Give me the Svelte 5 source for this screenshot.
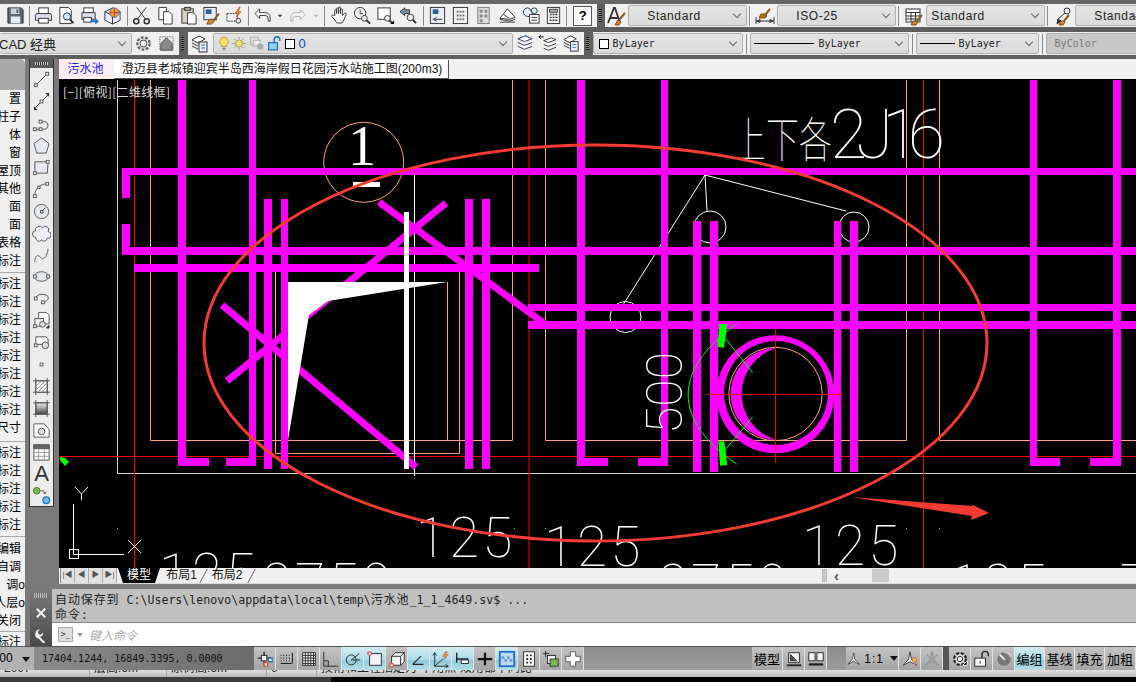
<script>
  // 20x20 icons, kept as svg fragments
  const I = {
    save: '<path d="M2 2h14l2 2v14H2z" fill="#566674" stroke="#333"/><rect x="5" y="2.5" width="9" height="6" fill="#c9d0d6" stroke="none"/><rect x="5" y="11" width="10" height="7" fill="#e8ebee" stroke="none"/><rect x="11" y="3.5" width="2" height="4" fill="#566674" stroke="none"/>',
    print: '<rect x="5" y="2" width="10" height="6" fill="#fff"/><path d="M3 8h14a2 2 0 0 1 1.500 2v5H1.500v-5A2 2 0 0 1 3 8z" fill="#dde"/><rect x="5" y="13" width="10" height="5" fill="#fff"/>',
    preview: '<path d="M3 1.500h9l3 3v14H3z" fill="#fff"/><circle cx="10.500" cy="11" r="3.800" fill="#cfe6f5"/><path d="M13.500 14l4 4" stroke-width="2"/>',
    publish: '<rect x="4" y="2" width="10" height="5" fill="#fff"/><path d="M2 7h14v7H2z" fill="#dde"/><rect x="4" y="12" width="8" height="5" fill="#fff"/><path d="M11 15h5v-2.500l4 3.500-4 3.500V17h-5z" fill="#1b6fc0" stroke="none"/>',
    plot3d: '<path d="M2 6l8-4 8 4v9l-8 4-8-4z" fill="#eef"/><path d="M2 6l8 4 8-4M10 10v9"/><circle cx="12" cy="7" r="5" fill="#e8a13a" stroke="#2b7ccc"/><path d="M12 2v10M7 7h10" stroke="#d33"/>',
    cut: '<path d="M5 1.500l9 12M15 1.500l-9 12"/><circle cx="4.500" cy="16" r="2.700" stroke-width="1.600"/><circle cx="15.500" cy="16" r="2.700" stroke-width="1.600"/>',
    copy: '<path d="M3 1.500h8v13H3z" fill="#fff"/><path d="M8 6h6l3 3v10H8z" fill="#fff"/>',
    paste: '<rect x="3" y="3" width="12" height="15" fill="#d6d0c0"/><rect x="6" y="1.500" width="6" height="3" fill="#aaa"/><path d="M9 7h6l3 3v9H9z" fill="#fff"/>',
    match: '<rect x="2" y="1.500" width="13" height="13" fill="#e8eef5"/><rect x="4" y="3.500" width="6" height="5" fill="#2a5f9e" stroke="none"/><path d="M18 8l-6 7" stroke="#8a5a20" stroke-width="2"/><path d="M8 14l4 0 1 2-3 3-5 0z" fill="#d88a2a" stroke="#7a4a10"/>',
    block: '<rect x="2" y="8" width="11" height="8" stroke-dasharray="2 1"/><circle cx="14" cy="15.500" r="2.500" fill="#eee"/><path d="M15 1l-4 6h3l-2 5 5-6h-3l2-5z" fill="#f0a020" stroke="#b33" stroke-width=".6"/>',
    undo: '<path d="M7 3L2 8l5 5v-3h6a3 3 0 0 1 3 3v3h2v-4a5 5 0 0 0-5-5H7z" fill="#fff"/>',
    redo: '<path d="M13 4l5 5-5 5v-3H8a3 3 0 0 0-3 3v2H3v-4a5 5 0 0 1 5-5h5z" fill="#f4f4f4" stroke="#aaa"/>',
    down: '<path d="M6 8h8l-4 4z" fill="#333" stroke="none"/>',
    downg: '<path d="M6 8h8l-4 4z" fill="#aaa" stroke="none"/>',
    hand: '<path d="M5 10V5a1 1 0 0 1 2 0v3-5a1 1 0 0 1 2 0v5-6a1 1 0 0 1 2 0v6-4a1 1 0 0 1 2 0v6l2-2a1 1 0 0 1 2 1l-3 7a3 3 0 0 1-3 2H9a3 3 0 0 1-3-2l-4-5a1 1 0 0 1 2-1z" fill="#fff"/>',
    zoomrt: '<circle cx="7.500" cy="7.500" r="6" fill="#eee"/><path d="M7.500 4v4h3"/><circle cx="12" cy="13" r="3" fill="#fff"/><path d="M14 15l4 3.500" stroke-width="2"/>',
    zoomwin: '<rect x="2" y="2" width="13" height="12" fill="#fff"/><circle cx="12" cy="13" r="3" fill="#eee"/><path d="M14 15l3 3" stroke-width="2"/><path d="M15 19l4-4v4z" fill="#000" stroke="none"/>',
    zoomprev: '<path d="M1 6l5-4v2h5v4H6v2z" fill="#7790a8"/><circle cx="12" cy="12" r="3.500" fill="#eee"/><path d="M14.500 14.500l3.500 3.500" stroke-width="2"/>',
    prop: '<rect x="2.500" y="1.500" width="15" height="17" fill="#e8eef5"/><rect x="5" y="3.500" width="6" height="5" fill="#2a5f9e" stroke="none"/><path d="M5 14h10M9 12l-3 2 3 2"/>',
    design: '<rect x="2.500" y="1.500" width="15" height="17" fill="#f2f2f2"/><path d="M6 5h2v2H6zM9 5h2v2H9zM12 5h2v2h-2zM6 9h2v2H6zM9 9h2v2H9zM12 9h2v2h-2zM6 13h2v2H6zM9 13h2v2H9zM12 13h2v2h-2z" fill="#777" stroke="none"/>',
    palette: '<rect x="4" y="1.500" width="12" height="17" fill="#ddd" stroke="#777"/><path d="M6 4h3v3H6zM11 4h3v3h-3zM6 9h3v3H6zM11 9h3v3h-3zM6 14h3v3H6z" fill="#888" stroke="none"/>',
    sheet: '<path d="M2 13l8-10 8 9-6 2z" fill="#fff"/><path d="M2 14l10 2 6-2M2 17h16"/><path d="M6 9l6 4"/>',
    markup: '<path d="M7 2a3 3 0 0 1 3 3 3 3 0 0 1-3 6 3 3 0 0 1 0-9z" fill="#e8f2f8"/><rect x="9" y="9" width="10" height="9" fill="#fff"/><path d="M11 12h6M11 15h6"/><circle cx="14" cy="5" r="3" fill="#dff"/>',
    calc: '<rect x="3.500" y="1.500" width="13" height="17" fill="#f4f4f4"/><rect x="6" y="3.500" width="8" height="3" fill="#bbb"/><path d="M6 9h2M9 9h2M12 9h2M6 12h2M9 12h2M12 12h2M6 15h2M9 15h2M12 15h2" stroke-width="1.500"/>',
    astyle: '<path d="M1 17L7 2h1l5 15M3.500 12h7" stroke-width="1.800"/><path d="M18 7l-6 7" stroke="#8a5a20" stroke-width="2"/><path d="M11 14l3 2-2 3-4 0z" fill="#d88a2a" stroke="#7a4a10"/>',
    dstyle: '<path d="M1 11v7M19 11v7M1 15h18M2 15l3-1.500v3zM18 15l-3-1.500v3z"/><path d="M15 3l-5 6" stroke="#8a5a20" stroke-width="2"/><path d="M6 8l4 0 2 2-2 2-6 0z" fill="#b86a20" stroke="#7a4a10"/>',
    tstyle: '<rect x="2" y="3" width="14" height="13" fill="#fff"/><path d="M2 6.500h14M2 10h14M2 13h14M7 6.500V16M11.500 6.500V16"/><path d="M18 9l-5 6" stroke="#8a5a20" stroke-width="2"/><path d="M9 15l4 0 1 1-2 3-5 0z" fill="#d88a2a" stroke="#7a4a10"/>',
    mstyle: '<circle cx="14" cy="5" r="3"/><path d="M12 7L5 13v4"/><path d="M4 18l1-5 3 2z" fill="#333"/><path d="M16 9l-5 6" stroke="#8a5a20" stroke-width="2"/><path d="M8 15l3 0 1 1-2 3-4 0z" fill="#d88a2a" stroke="#7a4a10"/>',
    gear: '<circle cx="10" cy="10" r="6.500" stroke="#666" stroke-width="2.500" stroke-dasharray="3 1.500"/><circle cx="10" cy="10" r="3.500" stroke="#666" stroke-width="1.200"/>',
    house: '<rect x="3" y="3" width="14" height="14" stroke="#666" stroke-dasharray="1.500 1"/><path d="M4 10l6-6 6 6v7H4z" fill="#888" stroke="#555"/>',
    laymgr: '<path d="M2 6l7-4 6 3-7 4zM2 9l6 3M2 12l6 3" fill="#fff"/><rect x="9" y="8" width="8" height="10" fill="#eef"/><path d="M11 11h4M11 14h4" stroke="#27a"/>',
    bulb: '<path d="M10 2a5.500 5.500 0 0 1 3 10v2H7v-2a5.500 5.500 0 0 1 3-10z" fill="#f8e36a" stroke="#a88a20"/><path d="M7.500 16h5M8.500 18h3" stroke="#888" stroke-width="1.500"/>',
    sun: '<circle cx="10" cy="10" r="4.500" fill="#f6e27a" stroke="#a88a20"/><path d="M10 1.500v3M10 15.500v3M1.500 10h3M15.500 10h3M4 4l2 2M14 14l2 2M4 16l2-2M14 6l2-2" stroke="#888"/>',
    vpfreeze: '<rect x="2" y="2" width="10" height="10" stroke="#aaa" fill="#ddd"/><rect x="6" y="6" width="8" height="7" stroke="#aaa" fill="#eee"/><circle cx="14" cy="14" r="4" fill="#aaa" stroke="#ccc" stroke-dasharray="2 1"/>',
    lockopen: '<rect x="2" y="9" width="11" height="9" fill="#9ad0ee" stroke="#1b6fc0" stroke-width="1.500"/><path d="M9 9V5a3.500 3.500 0 0 1 7 0v2" stroke="#1b6fc0" stroke-width="1.800"/>',
    layers: '<path d="M3 5l8-3 7 3-8 3zM3 9l7 3 8-3M3 13l7 3 8-3" fill="#fff" stroke="#335"/><path d="M11 2l3 1" stroke="#27a"/>',
    layprev: '<path d="M6 7l8-3 5 2-8 3zM6 11l5 2 8-3M6 15l5 2 8-3" fill="#fff"/><path d="M1 3h5M1 3l2-2M1 3l2 2" stroke="#000"/>',
    line: '<path d="M4 16L16 4" stroke="#444"/><rect x="2.500" y="14.500" width="3" height="3" fill="#fff"/><rect x="14.500" y="2.500" width="3" height="3" fill="#fff"/>',
    xline: '<path d="M3 17L17 3" stroke="#444"/><path d="M2 15v4h4zM18 5V1h-4z" fill="#333" stroke="none"/><rect x="8.500" y="8.500" width="3" height="3" fill="#fff"/>',
    pline: '<path d="M3 16h10c5 0 5-8 0-8H9"/><rect x="1.500" y="14.500" width="3" height="3" fill="#fff"/><rect x="7.500" y="14.500" width="3" height="3" fill="#fff"/><rect x="7.500" y="6.500" width="3" height="3" fill="#fff"/>',
    polygon: '<path d="M10 2l8 6-3 10H5L2 8z" fill="#e6e8f0" stroke="#555"/>',
    rect: '<path d="M3 4h14l-1 12H3z" fill="#e6e8f0" stroke="#555"/><rect x="1.500" y="14.500" width="3" height="3" fill="#fff"/><rect x="15" y="2.500" width="3" height="3" fill="#fff"/>',
    arc: '<path d="M3 16C3 9 9 4 16 4"/><rect x="1.500" y="15.500" width="3" height="3" fill="#fff"/><rect x="14.500" y="2.500" width="3" height="3" fill="#fff"/><rect x="6" y="6.500" width="2.500" height="2.500" fill="#fff"/>',
    circle: '<circle cx="10" cy="10" r="7.500" fill="#e6e8f0"/><path d="M10 10l4-4"/><rect x="9" y="9" width="2.500" height="2.500" fill="#fff"/>',
    cloud: '<path d="M6 3a3.500 3.500 0 0 1 5 1 3.500 3.500 0 0 1 6 4 3.500 3.500 0 0 1-1 7 3.500 3.500 0 0 1-6 2 3.500 3.500 0 0 1-6-3 3.500 3.500 0 0 1 0-7 3 3 0 0 1 2-4z" fill="#eef"/>',
    spline: '<path d="M3 17c0-8 4-8 6-5s6 2 8-9"/>',
    ellipse: '<ellipse cx="10" cy="10" rx="7.500" ry="5" fill="#e6e8f0"/><rect x="1.500" y="8.500" width="3" height="3" fill="#fff"/><rect x="15.500" y="8.500" width="3" height="3" fill="#fff"/>',
    earc: '<path d="M4 10a7 5 0 0 1 13-2 7 5 0 0 1-5 6"/><rect x="2.500" y="8.500" width="3" height="3" fill="#fff"/><rect x="10" y="12.500" width="3" height="3" fill="#fff"/>',
    insert: '<path d="M7 1.500h8l3 3v9H7z" fill="#fff"/><rect x="3" y="8" width="9" height="8" fill="#eef"/><circle cx="11" cy="14" r="3" fill="#ddd"/><path d="M15 18h3v-3z" fill="#000"/><rect x="1.500" y="14.500" width="3" height="3" fill="#fff"/>',
    mkblock: '<path d="M4 4h11l2 3v5H4z" fill="#f4f4f4"/><circle cx="14" cy="13" r="3.500" fill="#ddd"/><rect x="2.500" y="11.500" width="3" height="3" fill="#fff"/>',
    point: '<rect x="8.500" y="8.500" width="3" height="3" fill="#fff"/>',
    hatch: '<rect x="4" y="4" width="12" height="12" fill="#fff"/><path d="M1 4h18M1 16h18M4 1v18M16 1v18"/><path d="M5 9l4-4M5 13l8-8M7 15l8-8M11 15l4-4" stroke="#777"/>',
    gradient: '<defs><linearGradient id="g1" x1="0" y1="0" x2="0" y2="1"><stop offset="0" stop-color="#eee"/><stop offset="1" stop-color="#444"/></linearGradient></defs><rect x="4" y="4" width="12" height="12" fill="url(#g1)"/><path d="M1 4h18M1 16h18M4 1v18M16 1v18"/>',
    region: '<path d="M2 3h11l5 6v8H2z" fill="#fff"/><circle cx="10" cy="11" r="3.500" fill="#ddd"/>',
    table: '<rect x="2" y="2" width="16" height="16" fill="#fff"/><rect x="2" y="2" width="16" height="4" fill="#666"/><path d="M2 10h16M2 14h16M7 6v12M13 6v12" stroke="#999"/>',
    addsel: '<circle cx="5" cy="5" r="3.500" fill="#7ab648" stroke="#4a7a28"/><circle cx="15" cy="15" r="3.500" fill="#7ab8ee" stroke="#1b6fc0" stroke-width="1.300"/><path d="M9 5h3l2 3M14 8l-2-.5M14 8l1-2"/>',
    s_infer: '<path d="M9 2v15M2 9h15" stroke-width="1.500"/><rect x="6" y="6" width="6" height="6" fill="#fff"/><rect x="14" y="9" width="4" height="4" fill="#fff" stroke="#27a" stroke-width="1.500"/><rect x="9" y="14" width="4" height="4" fill="#fff" stroke="#d55" stroke-width="1.500"/>',
    s_snap: '<path d="M3 6h1M6 6h1M9 6h1M12 6h1M3 9h1M6 9h1M9 9h1M12 9h1M3 12h1M6 12h1M9 12h1M12 12h1M3 15h12M16 3v12" stroke-width="1.200"/>',
    s_grid: '<rect x="3" y="3" width="14" height="14" fill="#fff"/><path d="M6 3v14M9 3v14M12 3v14M15 3v14M3 6h14M3 9h14M3 12h14M3 15h14"/>',
    s_ortho: '<path d="M2 2v16h16M7 12v6M2 12h5"/>',
    s_polar: '<circle cx="8" cy="11" r="5.500"/><path d="M8 11l9-7M8 11h10"/>',
    s_osnap: '<rect x="4" y="4" width="13" height="13" fill="#f4f4f4"/><circle cx="4" cy="4" r="2" fill="#fff" stroke="#d55" stroke-width="1.500"/>',
    s_3d: '<path d="M4 7l4-4h10v10l-4 4H4z" fill="#f4f4f4"/><path d="M4 7h10v10M14 7l4-4"/><circle cx="4" cy="17" r="2" fill="#fff" stroke="#d55" stroke-width="1.500"/>',
    s_otrack: '<path d="M3 16h12M3 16l9-9" stroke-width="1.300"/>',
    s_ducs: '<path d="M3 3v15h15M3 3l-2 3M3 3l2 3M18 18l-3-2M18 18l-3 2M3 18l9-8"/><path d="M15 2l-3 5h3l-2 4 5-6h-3l2-3z" fill="#f0a020" stroke="#b33" stroke-width=".5"/>',
    s_dyn: '<path d="M3 3v11M3 10h13" stroke-width="1.500"/><rect x="8" y="11" width="8" height="4" fill="#fff"/>',
    s_lw: '<path d="M10 3v14M2 10h16" stroke-width="2.500" stroke="#111"/>',
    s_tp: '<rect x="2" y="2" width="16" height="16" fill="#bcd8f0" stroke="#1b6fc0" stroke-width="2"/><path d="M4 7h3v3H4zM10 7h3v3h-3zM7 10h3v3H7zM13 10h3v3h-3z" fill="#6a9ed0" stroke="none"/>',
    s_qp: '<rect x="4" y="2" width="12" height="16" fill="#fff"/><path d="M7 6h2M11 6h2M7 10h2M11 10h2M7 14h2M11 14h2" stroke-width="2"/>',
    s_sc: '<path d="M4 1v7M1 4h7"/><rect x="6" y="6" width="9" height="9" fill="#f4f4f4"/><rect x="9" y="10" width="9" height="8" fill="#7ab648" stroke="#333"/>',
    s_am: '<path d="M7 2h6v5h5v6h-5v5H7v-5H2V7h5z" fill="#fff" stroke="#555"/>',
    m_model: '<path d="M4 3h12v11H4z" fill="#f4f4f4"/><path d="M6 5v7h7z" fill="#555"/><path d="M2 17h16" stroke-width="2"/>',
    m_quick: '<rect x="2" y="3" width="7" height="9" fill="#f4f4f4"/><rect x="11" y="3" width="7" height="9" fill="#f4f4f4"/><path d="M2 16h16" stroke-width="2.500"/>',
    anno: '<path d="M10 2l1.500 8 6 7-7.500-4-7.500 4 6-7z" fill="#fff" stroke="#333"/>',
    anno2: '<path d="M10 2l1.500 8 6 7-7.500-4-7.500 4 6-7z" fill="#fff" stroke="#333"/><circle cx="15" cy="11" r="2.500" fill="#f0c030" stroke="#d55"/><path d="M14 14h2v3h-2z" fill="#d88"/>',
    anno3: '<path d="M10 2l1.500 8 6 7-7.500-4-7.500 4 6-7z" fill="#bbb" stroke="#888"/><path d="M4 5l12 12M16 5L4 17" stroke="#999" stroke-width="1.500"/>',
    wk: '<circle cx="10" cy="10" r="6.500" fill="#ddd" stroke="#222" stroke-width="2.500" stroke-dasharray="3.500 1.600"/><circle cx="10" cy="10" r="3" fill="#fff" stroke="#222"/><path d="M13 17h5v-5z" fill="#000" stroke="#fff"/>',
    lock: '<rect x="2" y="9" width="12" height="9" fill="#f4f4f4"/><path d="M8 12v3"/><path d="M10 9V5a3.500 3.500 0 0 1 7 0v2" stroke-width="1.500"/>',
    iso: '<circle cx="10" cy="10" r="7.500" fill="#777"/><path d="M5 5l6 6" stroke="#eee" stroke-width="2"/><path d="M10 2.500a7.500 7.500 0 0 1 7 5" stroke="#ccc" stroke-width="1.500"/>'
  };

  const sep = { sep: true };
  const tb1 = [
    ['save', 22], sep, ['print'], ['preview'], ['publish'], ['plot3d'], sep,
    ['cut'], ['copy'], ['paste'], ['match'], ['block'], sep,
    ['undo', 22], ['down', 12], ['redo', 24], ['downg', 12], sep,
    ['hand'], ['zoomrt'], ['zoomwin'], ['zoomprev'], sep,
    ['prop'], ['design'], ['palette'], ['sheet'], ['markup'], ['calc']
  ];

  const palette = ['line', 'xline', 'pline', 'polygon', 'rect', 'arc', 'circle', 'cloud', 'spline', 'ellipse', 'earc', 'insert', 'mkblock', 'point', 'hatch', 'gradient', 'region', 'table', 'A', 'addsel'];

  const sideGroups = [
    ['置', '柱子', '体', '窗', '屋顶', '其他', '面', '面', '表格', '标注'],
    ['标注', '标注', '标注', '标注', '标注', '标注', '标注', '标注', '尺寸'],
    ['标注', '标注', '标注', '标注', '标注'],
    ['编辑', '自调', '调o', '人层o', '关闭'],
    ['标注']
  ];

  const leftStatus = [
    ['s_infer'], ['s_snap'], ['s_grid'], ['s_ortho'], ['s_polar', 1], ['s_osnap', 1], ['s_3d'],
    ['s_otrack', 1], ['s_ducs', 1], ['s_dyn', 1], ['s_lw'], ['s_tp', 1], ['s_qp'], ['s_sc'], ['s_am']
  ];

  const greens = [[117, 528], [514, 528], [545, 528], [906, 528], [939, 528]];

  // magenta bars, [x, y, w, h]
  const bars = [
    [178, 80, 8, 386], [178, 458, 31, 8], [226, 458, 30, 8], [249, 80, 7, 386],
    [577, 80, 8, 386], [577, 458, 31, 8], [638, 458, 30, 8], [661, 80, 7, 386],
    [1030, 80, 7, 386], [1030, 458, 30, 8], [1090, 458, 31, 8], [1113, 80, 8, 386],
    [264, 199, 8, 270], [281, 199, 7, 270], [465, 199, 8, 270], [482, 199, 8, 270],
    [693, 221, 8, 251], [710, 221, 8, 251], [834, 221, 7, 251], [850, 221, 8, 251],
    [122, 168, 1014, 7], [122, 168, 8, 30], [122, 224, 8, 31], [122, 247, 1014, 8],
    [134, 264, 405, 8], [528, 304, 608, 7], [528, 321, 608, 8]
  ];
</script>

<div class="app">
  <div class="strip"></div>

  <div class="tb tb1">
    {#each tb1 as t}
      {#if t.sep}
        <i class="sep"></i>
      {:else}
        <span class="btn" style:width="{t[1] || 23.100}px">
          <svg viewBox="0 0 20 20" width={t[1] === 12 ? 14 : 19} height={t[1] === 12 ? 14 : 19} fill="none" stroke="#333">{@html I[t[0]]}</svg>
        </span>
      {/if}
    {/each}
    <i class="sep help-sep"></i>
    <span class="help">?</span>
    <span class="grip dark-grip"></span>
    <span class="btn sty0"><svg viewBox="0 0 20 20" width="20" height="20" fill="none" stroke="#333">{@html I.astyle}</svg></span>
    <span class="combo w119 pad18">Standard</span>
    <i class="sep s2"></i>
    <span class="btn sty"><svg viewBox="0 0 20 20" width="20" height="20" fill="none" stroke="#333">{@html I.dstyle}</svg></span>
    <span class="combo w119 pad18">ISO-25</span>
    <i class="sep s2"></i>
    <span class="btn sty"><svg viewBox="0 0 20 20" width="20" height="20" fill="none" stroke="#333">{@html I.tstyle}</svg></span>
    <span class="combo w119">Standard</span>
    <i class="sep s2"></i>
    <span class="btn sty"><svg viewBox="0 0 20 20" width="20" height="20" fill="none" stroke="#333">{@html I.mstyle}</svg></span>
    <span class="combo last pad18">Standard</span>
  </div>

  <div class="gap5"></div>

  <div class="tb tb2">
    <span class="combo wsp">CAD 经典</span>
    <span class="btn"><svg viewBox="0 0 20 20" width="19" height="19" fill="none">{@html I.gear}</svg></span>
    <span class="btn"><svg viewBox="0 0 20 20" width="19" height="19" fill="none">{@html I.house}</svg></span>
    <span class="grip g2"></span>
    <span class="btn lay"><svg viewBox="0 0 20 20" width="20" height="20" fill="none" stroke="#333">{@html I.laymgr}</svg></span>
    <span class="combo layer">
      {#each ['bulb', 'sun', 'vpfreeze', 'lockopen'] as n}
        <svg viewBox="0 0 20 20" width="16" height="17" fill="none" stroke="#333">{@html I[n]}</svg>
      {/each}
      <b class="sq"></b><em>0</em>
    </span>
    <span class="btn b3"><svg viewBox="0 0 20 20" width="19" height="19" fill="none" stroke="#333">{@html I.layers}</svg></span>
    <span class="btn b3"><svg viewBox="0 0 20 20" width="19" height="19" fill="none" stroke="#333">{@html I.layprev}</svg></span>
    <span class="btn b3"><svg viewBox="0 0 20 20" width="19" height="19" fill="none" stroke="#333">{@html I.laymgr}</svg></span>
    <span class="grip g3"></span>
    <span class="combo c-bl"><b class="sq s2q"></b>ByLayer</span>
    <i class="sep s3"></i>
    <span class="combo c-lt"><u class="ln ln60"></u>ByLayer</span>
    <i class="sep s3"></i>
    <span class="combo c-lw"><u class="ln ln35"></u>ByLayer</span>
    <i class="sep s3"></i>
    <span class="combo c-pl">ByColor</span>
  </div>

  <div class="gap4"></div>

  <div class="body">
    <div class="side">
      <div class="side-head"></div>
      {#each sideGroups as g}
        <div class="group">
          {#each g as label}
            <div class="row" class:flush={label.endsWith('o')}><span>{label}</span></div>
          {/each}
        </div>
      {/each}
    </div>

    <div class="rest">
      <div class="work">
        <div class="pal">
          <div class="pal-grip"></div>
          {#each palette as p}
            <div class="pal-cell">
              {#if p === 'A'}
                <span class="big-a">A</span>
              {:else}
                <svg viewBox="0 0 20 20" width="19" height="19" fill="none" stroke="#555">{@html I[p]}</svg>
              {/if}
            </div>
          {/each}
        </div>

        <div class="center">
          <div class="tabs">
            <span class="tab first">污水池</span>
            <span class="tab second">澄迈县老城镇迎宾半岛西海岸假日花园污水站施工图(200m3)</span>
          </div>

          <svg class="canvas" viewBox="59 79 1077 489" width="1077" height="489">
            <g stroke="#ffa07a" fill="none">
              <path d="M150.500 80V440.500H512.500V80M545.500 80V440.500H906.500V80M939.500 80V440.500H1136" />
              <path d="M275.500 272V453.500H459.500V272M447.500 282V440" />
              <circle cx="363.700" cy="162.300" r="40" />
              <circle cx="775.500" cy="394" r="46.700" />
            </g>
            <path d="M117.500 80V473.500H1136" stroke="#d8d8c8" fill="none" />
            <path d="M134.500 80V568M529 80V568M923.500 80V568M59 456.500H1136" stroke="#f00" fill="none" />

            <g stroke="#fff" fill="none">
              <path d="M414.500 175V476" />
              <path d="M623 305L705 175L707 211M705 175L846 211" />
              <circle cx="710" cy="227" r="16" />
              <circle cx="854" cy="227" r="15" />
              <circle cx="625.500" cy="317" r="15.500" />
            </g>

            {#each greens as g}
              <rect x={g[0]} y={g[1]} width="1" height="1" fill="#0f0" />
            {/each}

            {#each bars as b}
              <rect x={b[0]} y={b[1]} width={b[2]} height={b[3]} fill="#f0f" />
            {/each}
            <g stroke="#f0f" stroke-width="7" fill="none">
              <path d="M222 305L416 467" />
              <path d="M379 202L545 324" />
              <path d="M227 381L446 203" />
            </g>
            <path d="M775.300 335.300a59 59 0 1 0 .01 0zM776 341a52 52 0 1 1-.01 0z" fill="#f0f" fill-rule="evenodd" />
            <path d="M776.700 348A46 46 0 0 0 776.700 440A47.700 47.700 0 0 1 776.700 348z" fill="#f0f" />

            <path d="M707 394.500H843M775.500 329V463" stroke="#f00" fill="none" />
            <path d="M736.700 324C672 370 672 420 736.700 464M725 338L752.700 372.700M752.700 417L725 450" stroke="#0f0" fill="none" />
            <path d="M719.300 324H727.300L724 347.700L717.300 347zM718.300 441.300H724.300L727.300 465L720 465.700z" fill="#0f0" />
            <path d="M60 457L65 458L69 462L65 466L60 460z" fill="#0f0" />

            <path d="M288 282H447L328 301L309 315L288 440z" fill="#fff" />
            <rect x="404" y="212" width="5" height="257" fill="#fff" />
            <rect x="353" y="182" width="27" height="5" fill="#fff" />
            <text x="362" y="165" class="t-one">1</text>

            <text transform="translate(733 157) scale(1 1.450)" class="t-thin t-zh">上下各</text>
            <text x="830" y="158" class="t-thin t-ref" textLength="115">2J16</text>
            <text transform="translate(682 434) rotate(-90)" class="t-thin t-500">500</text>
            <text x="416" y="557" class="t-thin t-num">125</text>
            <text x="544" y="566" class="t-thin t-num">125</text>
            <text x="802" y="565" class="t-thin t-num">125</text>
            <text x="159" y="593" class="t-thin t-num">125</text>
            <text x="262" y="603" class="t-thin t-num">2750</text>
            <text x="658" y="604" class="t-thin t-num">2750</text>
            <text x="950" y="604" class="t-thin t-num">125</text>
            <text x="1120" y="604" class="t-thin t-num">7</text>

            <text x="63" y="97" class="t-view" textLength="107">[−][俯视][二维线框]</text>

            <g stroke="#fff" fill="none">
              <path d="M73.500 504V554.500H124" />
              <rect x="69.500" y="549.500" width="9" height="9" />
              <path d="M75 487L81.500 494L88 487M81.500 494V500" />
              <path d="M128 540L141 553M141 540L128 553" />
            </g>

            <ellipse cx="595.500" cy="343" rx="391.500" ry="198" fill="none" stroke="#f43c34" stroke-width="3" />
            <path d="M851 497L973 506L971 504L989 513L971 520L972 516z" fill="#f43c34" />
          </svg>

          <div class="ltabs">
            <div class="nav">
              <span>|◀</span><span>◀</span><span>▶</span><span>▶|</span>
            </div>
            <span class="lt active">模型</span>
            <span class="lt">布局1</span>
            <span class="lt lt3">布局2</span>
            <div class="scroll"><b class="sgrip"></b><em>‹</em><b class="thumb"></b></div>
          </div>
        </div>
      </div>

      <div class="cmd">
        <div class="cmd-side">
          <span class="dots"></span>
          <svg viewBox="0 0 20 20" width="14" height="14" stroke="#eee" stroke-width="3"><path d="M4 4l12 12M16 4L4 16" /></svg>
          <svg viewBox="0 0 20 20" width="15" height="15" fill="#eee"><path d="M2 7a5 5 0 0 1 6-5L5 5l1 3 3 1 3-3a5 5 0 0 1-4 6l7 7-2 2-7-7a5 5 0 0 1-4-7z" /></svg>
        </div>
        <div class="cmd-main">
          <div class="hist">
            <div><span class="zh">自动保存到</span> C:\Users\lenovo\appdata\local\temp\<span class="zh">污水池</span>_1_1_4649.sv$ ...</div>
            <div><span class="zh">命令</span>:</div>
          </div>
          <div class="input">
            <span class="prompt">&gt;_</span><span class="pdown"></span>
            <span class="ph">键入命令</span>
          </div>
        </div>
      </div>
    </div>
  </div>

  <div class="status">
    <span class="st-left">.00 <i></i></span>
    <span class="coords">17404.1244, 16849.3395, 0.0000</span>
    <span class="st-pad"></span>
    {#each leftStatus as s}
      <span class="cell" class:on={s[1]}>
        <svg viewBox="0 0 20 20" width="18" height="18" fill="none" stroke="#222">{@html I[s[0]]}</svg>
      </span>
    {/each}
    <span class="st-fill"></span>
    <span class="cell txt">模型</span>
    <span class="cell"><svg viewBox="0 0 20 20" width="18" height="18" fill="none" stroke="#222">{@html I.m_model}</svg></span>
    <span class="cell"><svg viewBox="0 0 20 20" width="18" height="18" fill="none" stroke="#222">{@html I.m_quick}</svg></span>
    <span class="st-fill f19"></span>
    <span class="cell scale"><svg viewBox="0 0 20 20" width="18" height="18">{@html I.anno}</svg>1:1 <i></i></span>
    <span class="cell"><svg viewBox="0 0 20 20" width="18" height="18">{@html I.anno2}</svg></span>
    <span class="cell"><svg viewBox="0 0 20 20" width="18" height="18">{@html I.anno3}</svg></span>
    <span class="st-dark"></span>
    <span class="cell"><svg viewBox="0 0 20 20" width="18" height="18" fill="none">{@html I.wk}</svg></span>
    <span class="cell"><svg viewBox="0 0 20 20" width="18" height="18" fill="none" stroke="#222">{@html I.lock}</svg></span>
    <span class="cell"><svg viewBox="0 0 20 20" width="18" height="18" fill="none">{@html I.iso}</svg></span>
    <span class="cell txt w30 on">编组</span>
    <span class="cell txt w30">基线</span>
    <span class="cell txt w30">填充</span>
    <span class="cell txt w31">加粗</span>
  </div>

  <div class="peek">
    <span class="pk p1">2007</span><span class="pk p2">层高:6m</span><span class="pk p3">原树高:6m</span><span class="pk p4">0</span><span class="pk p5">技術和工程指定为 十用点 效用都不同比</span>
  </div>
  <div class="foot"><b></b></div>
</div>

<style>
  :global(body) { margin: 0; background: #000; }

  .app {
    width: 1136px;
    height: 682px;
    overflow: hidden;
    display: flex;
    flex-direction: column;
    background: #6e6e6e;
    font-family: "Liberation Sans", "Noto Sans CJK SC", sans-serif;
    font-size: 12px;
    color: #000;
  }

  .strip { height: 4px; background: #666; flex: none; }
  .gap5 { height: 5px; background: #5e5e5e; flex: none; }
  .gap4 { height: 4px; background: #5e5e5e; flex: none; }

  .tb {
    height: 23px;
    flex: none;
    display: flex;
    align-items: center;
    background: #f0f0f0;
    overflow: hidden;
    white-space: nowrap;
  }
  .tb1 { padding-left: 4px; }

  .btn {
    flex: none;
    width: 23.300px;
    height: 23px;
    display: inline-flex;
    align-items: center;
    justify-content: center;
  }
  .sep {
    flex: none;
    width: 1px;
    height: 20px;
    margin: 0 2.500px;
    background: #8a8a8a;
  }
  .help-sep { margin-left: 1px; }
  .help {
    flex: none;
    width: 17px;
    height: 18px;
    margin: 0 5px 0 4px;
    border: 1px solid #555;
    background: #fafafa;
    text-align: center;
    line-height: 18px;
    font: bold 13px/18px "Liberation Sans", sans-serif;
  }
  .grip {
    flex: none;
    align-self: stretch;
    background: #606060;
    position: relative;
  }
  .grip::after {
    content: "";
    position: absolute;
    top: 5px;
    bottom: 5px;
    left: 2px;
    width: 3px;
    background: repeating-linear-gradient(#111 0 1px, #888 1px 2px);
  }
  .dark-grip { width: 8px; }
  .sty0 { width: 23px; }
  .sty { width: 25px; }
  .s2 { margin: 0 2px 0 2px; }

  .combo {
    flex: none;
    height: 21px;
    box-sizing: border-box;
    display: inline-flex;
    align-items: center;
    position: relative;
    background: linear-gradient(#e4e4e4, #dadada);
    border: 1px solid #b0b0b0;
    border-radius: 2px;
    padding-left: 4px;
    font-size: 12px;
    letter-spacing: 0.600px;
    color: #222;
  }
  .combo::after {
    content: "";
    position: absolute;
    right: 6px;
    top: 5px;
    width: 5px;
    height: 5px;
    border-right: 1.500px solid #666;
    border-bottom: 1.500px solid #666;
    transform: rotate(45deg);
  }
  .w119 { width: 119px; }
  .pad18 { padding-left: 18px; }
  .last { width: 70px; }

  .wsp { width: 132px; padding-left: 0; font-size: 13px; letter-spacing: 0; border-left: 0; text-indent: -1px; }
  .g2 { width: 9px; margin-left: 0; }
  .lay { width: 25px; }
  .layer { width: 300px; gap: 0; padding-left: 2px; }
  .layer svg { margin-right: 2px; }
  .layer svg:first-child { margin-right: -1px; }
  .sq {
    width: 8px;
    height: 8px;
    background: #fff;
    border: 1px solid #000;
    margin: 0 4px 0 0;
    flex: none;
  }
  .layer em { font-style: normal; color: #0c4aa8; font-size: 13px; }
  .b3 { width: 23.500px; }
  .g3 { width: 9px; margin-left: 0.500px; }
  .s2q { margin: 0 4px 0 1px; }
  .c-bl, .c-lt, .c-lw, .c-pl {
    font-family: "DejaVu Sans Mono", monospace;
    font-size: 10px;
    letter-spacing: 0;
  }
  .c-bl { width: 150px; }
  .c-lt { width: 159px; padding-left: 3px; }
  .c-lw { width: 123px; padding-left: 3px; }
  .c-pl { width: 95px; background: #c8c8c8; color: #777; padding-left: 8px; }
  .c-pl::after { display: none; }
  .s3 { margin: 0 3px; }
  .ln { display: block; height: 1px; background: #000; margin-right: 5px; flex: none; }
  .ln60 { width: 60px; }
  .ln35 { width: 35px; margin-right: 4px; }

  .body { height: 587px; flex: none; display: flex; }

  .side {
    width: 25px;
    flex: none;
    background: #f0f0f0;
    overflow: hidden;
  }
  .side-head {
    height: 31px;
    background: #a9a9a9;
    border-top-right-radius: 5px;
  }
  .group { border-bottom: 1px solid #aaa; padding-bottom: 2px; margin-bottom: 2px; }
  .group:nth-child(3) { padding-bottom: 4px; }
  .group:nth-child(4) { padding-bottom: 2px; margin-bottom: 3px; }
  .group:nth-child(5) { padding-bottom: 1px; margin-bottom: 1px; }
  .group:last-child { border: 0; }
  .row {
    height: 18px;
    line-height: 18px;
    display: flex;
    justify-content: flex-end;
    padding-right: 4px;
    white-space: nowrap;
    font-size: 12px;
  }
  .row.flush { padding-right: 0; }

  .rest { flex: 1; min-width: 0; display: flex; flex-direction: column; background: #7a7a7a; }
  .work { height: 526px; flex: none; display: flex; padding-left: 4px; }

  .pal {
    width: 23px;
    height: 447px;
    flex: none;
    background: #ececec;
    border: 1px solid #333;
    border-top: 0;
    display: flex;
    flex-direction: column;
    align-items: center;
  }
  .pal-grip {
    width: 100%;
    height: 9px;
    flex: none;
    margin-bottom: 1px;
    background: #5a5a5a;
    position: relative;
  }
  .pal-grip::after {
    content: "";
    position: absolute;
    left: 5px;
    right: 5px;
    top: 3px;
    height: 3px;
    background: repeating-linear-gradient(90deg, #ccc 0 1px, #333 1px 2px);
  }
  .pal-cell {
    width: 100%;
    height: 21.900px;
    flex: none;
    display: flex;
    align-items: center;
    justify-content: center;
  }
  .big-a { font: 22px/22px "Liberation Sans", sans-serif; color: #333; }

  .center { width: 1077px; margin-left: 5px; flex: none; }

  .tabs {
    height: 20px;
    display: flex;
    align-items: stretch;
    background: #f0f0f0;
    box-sizing: border-box;
    padding-top: 1px;
  }
  .tab { line-height: 18px; white-space: nowrap; }
  .first {
    width: 53px;
    text-align: center;
    background: #fdeef1;
    color: #1c1cf0;
    font-size: 12px;
    margin-right: 2px;
    border-bottom: 1px solid #fdeef1;
  }
  .second {
    width: 335px;
    box-sizing: border-box;
    padding-left: 2px;
    text-align: center;
    background: #fff;
    border-right: 1px solid #555;
    border-bottom: 1px solid #555;
    color: #111;
  }

  .canvas { display: block; background: #000; overflow: hidden; }
  .canvas text { font-family: Roboto, "Liberation Sans", "Noto Sans CJK SC", sans-serif; }
  .canvas .t-thin { font-weight: 100; fill: #fff; }
  .canvas .t-num { font-size: 55px; letter-spacing: 3px; }
  .canvas .t-500 { font-size: 50px; }
  .canvas .t-zh { font-size: 33px; }
  .canvas .t-ref { font-size: 68px; }
  .canvas .t-one { font-family: "Liberation Serif", serif; font-size: 56px; fill: #fff; text-anchor: middle; }
  .canvas .t-view { font-family: "Noto Sans CJK SC", sans-serif; font-size: 12px; fill: #ddd; }

  .ltabs {
    height: 15px;
    margin-bottom: 2px;
    display: flex;
    align-items: stretch;
    background: #f0f0f0;
    border-bottom: 1px solid #d8d8d8;
  }
  .nav { width: 56px; display: flex; margin-left: 1px; background: #e2e2e2; border-left: 1px solid #888; flex: none; }
  .nav span {
    flex: 1;
    font-size: 8px;
    line-height: 14px;
    text-align: center;
    color: #555;
    border-right: 1px solid #aaa;
    white-space: nowrap;
    overflow: hidden;
  }
  .lt {
    width: 43px;
    flex: none;
    text-align: center;
    line-height: 15px;
    font-size: 12px;
    color: #111;
    position: relative;
  }
  .lt3 { width: 48px; }
  .lt::after {
    content: "";
    position: absolute;
    right: -1px;
    top: 1px;
    bottom: 0;
    border-right: 1px solid #666;
    transform: skewX(-28deg);
  }
  .active {
    width: 42px;
    margin-left: 1px;
    background: #000;
    color: #fff;
    clip-path: polygon(0 0, 100% 0, 88% 100%, 12% 100%);
  }
  .active::after { display: none; }
  .scroll { margin-left: auto; width: 314px; display: flex; align-items: center; position: relative; }
  .sgrip { width: 5px; height: 13px; background: #c8c8c8; border: 1px solid #bbb; box-sizing: border-box; }
  .scroll em { font: bold 15px/12px "Liberation Sans", sans-serif; color: #555; margin-left: 7px; }
  .thumb { width: 17px; height: 13px; background: #cacaca; margin-left: 33px; }

  .cmd { height: 57px; margin: 4px 0 0 5px; display: flex; flex: none; }
  .cmd-side {
    width: 22px;
    flex: none;
    box-sizing: border-box;
    padding-top: 4px;
    background: linear-gradient(#7a7a7a, #4a4a4a);
    display: flex;
    flex-direction: column;
    align-items: center;
    gap: 8px;
  }
  .dots {
    width: 14px;
    height: 5px;
    background: repeating-linear-gradient(90deg, #bbb 0 1px, transparent 1px 2px);
  }
  .cmd-main { flex: 1; display: flex; flex-direction: column; min-width: 0; }
  .hist {
    height: 34px;
    box-sizing: border-box;
    padding: 3px 0 0 3px;
    background: #c0c0c0;
    border-bottom: 1px solid #888;
    font-family: "DejaVu Sans Mono", "Noto Sans CJK SC", monospace;
    font-size: 11.600px;
    line-height: 14px;
    white-space: nowrap;
    color: #222;
  }
  .zh { letter-spacing: 0.900px; font-family: "Noto Sans CJK SC", sans-serif; font-size: 12px; }
  .input { flex: 1; background: #fff; display: flex; align-items: center; padding-left: 6px; }
  .prompt {
    width: 13px;
    height: 13px;
    border: 1px solid #aaa;
    background: #ddd;
    font: 8px/13px "DejaVu Sans Mono", monospace;
    text-align: center;
    color: #333;
  }
  .pdown {
    width: 0;
    height: 0;
    margin-left: 4px;
    border: 3.500px solid transparent;
    border-top: 4px solid #999;
    border-bottom: 0;
  }
  .ph { margin-left: 6px; font-style: italic; color: #aaa; font-size: 12px; }

  .status {
    height: 24px;
    flex: none;
    display: flex;
    background: #6a6a6a;
    border-top: 1px solid #555;
    box-sizing: border-box;
  }
  .status i {
    display: inline-block;
    width: 0;
    height: 0;
    border: 4px solid transparent;
    border-top: 5px solid #111;
    border-bottom: 0;
    margin-left: 3px;
  }
  .st-left {
    width: 34px;
    flex: none;
    box-sizing: border-box;
    background: #b2b2b2;
    font-size: 12px;
    line-height: 22px;
    text-indent: -4px;
    white-space: nowrap;
  }
  .st-left i { margin-left: 6px; }
  .coords {
    width: 216px;
    flex: none;
    box-sizing: border-box;
    padding-left: 8px;
    background: linear-gradient(90deg, #8c8c8c, #6c6c6c);
    font: 10px/23px "DejaVu Sans Mono", monospace;
    color: #111;
    white-space: nowrap;
  }
  .st-pad { width: 4px; flex: none; background: #6a6a6a; }
  .cell {
    width: 22px;
    flex: none;
    box-sizing: border-box;
    display: flex;
    align-items: center;
    justify-content: center;
    background: linear-gradient(#c4c4c4, #a4a4a4);
    border-right: 1px solid #e2e2e2;
  }
  .cell.on { background: linear-gradient(#d5edf4, #a9dbe8 55%, #8ec9d8 60%, #b4dfe9); }
  .st-fill { flex: 1; background: linear-gradient(#8c8c8c, #9c9c9c); }
  .f19 { flex: 0 0 19px; }
  .txt { width: 31px; font-size: 13px; }
  .w30 { width: 30px; }
  .w31 { width: 31px; }
  .scale { width: 53px; gap: 3px; white-space: nowrap; letter-spacing: 1px; }
  .st-dark { width: 6px; flex: none; background: #555; }

  .peek {
    height: 7px;
    flex: none;
    display: flex;
    overflow: hidden;
    background: linear-gradient(#e0e0e0, #b8b8b8);
  }
  .pk {
    flex: none;
    margin-top: -9px;
    line-height: 14px;
    font-size: 12px;
    white-space: nowrap;
    color: #222;
    box-sizing: border-box;
    border-right: 1px solid #aaa;
  }
  .p1 { width: 90px; padding-left: 4px; }
  .p2 { width: 77px; padding-left: 4px; }
  .p3 { width: 100px; padding-left: 4px; }
  .p4 { width: 50px; padding-left: 4px; }
  .p5 { padding-left: 4px; border: 0; }

  .foot { flex: 1; background: #000; }
  .foot b { display: block; width: 331px; height: 100%; background: #3c3c3c; }
</style>
